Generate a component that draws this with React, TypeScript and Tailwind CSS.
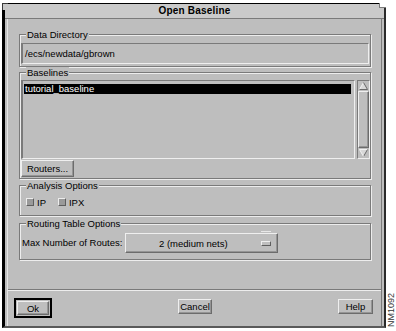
import React from "react";

const font = { fontFamily: '"Liberation Sans", Arial, Helvetica, sans-serif' };

const raised =
  "border border-t-[#efefef] border-l-[#efefef] border-b-[#6c6c6c] border-r-[#6c6c6c] shadow-[inset_-1px_-1px_0_#959595]";
const sunken =
  "border border-t-[#7a7a7a] border-l-[#7a7a7a] border-b-[#efefef] border-r-[#efefef]";

function Group({
  label,
  className = "",
  children,
}: {
  label: string;
  className?: string;
  children?: React.ReactNode;
}) {
  return (
    <div
      className={`relative border border-[#7a7a7a] shadow-[inset_1px_1px_0_#ededed,1px_1px_0_#ededed] ${className}`}
    >
      <span className="absolute left-[6px] top-[-6px] bg-[#bebebe] px-[1px] text-[9.5px] leading-[11px] text-black whitespace-nowrap">
        {label}
      </span>
      {children}
    </div>
  );
}

function Arrow({ down = false }: { down?: boolean }) {
  return (
    <div className="h-[10px] w-full flex items-center justify-center">
      <svg width="9" height="8" viewBox="0 0 9 8">
        {down ? (
          <>
            <polygon points="0.5,0.5 8.5,0.5 4.5,7.5" fill="#d8d8d8" />
            <polyline points="0.5,0.5 8.5,0.5" stroke="#f2f2f2" strokeWidth="1" fill="none" />
            <polyline points="8.5,0.5 4.5,7.5" stroke="#6a6a6a" strokeWidth="1" fill="none" />
            <polyline points="0.5,0.5 4.5,7.5" stroke="#f2f2f2" strokeWidth="1" fill="none" />
          </>
        ) : (
          <>
            <polygon points="4.5,0.5 8.5,7.5 0.5,7.5" fill="#d8d8d8" />
            <polyline points="4.5,0.5 0.5,7.5" stroke="#f2f2f2" strokeWidth="1" fill="none" />
            <polyline points="4.5,0.5 8.5,7.5 0.5,7.5" stroke="#6a6a6a" strokeWidth="1" fill="none" />
          </>
        )}
      </svg>
    </div>
  );
}

function Check({ label }: { label: string }) {
  return (
    <div className="flex items-center gap-[3px]">
      <span className="block w-[8px] h-[8px] bg-[#9a9a9a] border border-t-[#ececec] border-l-[#ececec] border-b-[#5e5e5e] border-r-[#5e5e5e]" />
      <span className="text-[9.5px] leading-[11px]">{label}</span>
    </div>
  );
}

export default function App() {
  return (
    <div
      className="w-[396px] h-[331px] bg-white flex overflow-hidden pl-[2px] pt-[3px] text-black"
      style={font}
    >
      <div className="relative w-[384px] h-[325px] flex flex-col bg-[#bebebe] border-l-[3px] border-l-black border-t border-t-black border-r-2 border-r-[#2a2a2a] border-b-2 border-b-[#5a5a5a]">
        {/* frame corner notches */}
        <span className="absolute left-[-3px] top-[-1px] block w-[6px] h-[7px] bg-[#c8c8c8] border-l border-t border-l-[#3a3a3a] border-t-[#3a3a3a]" />
        <span className="absolute right-[-2px] top-[-1px] block w-[7px] h-[5px] bg-white border-b border-l border-b-[#7a7a7a] border-l-[#7a7a7a]" />

        {/* title bar */}
        <div className="h-[15px] shrink-0 bg-[#cacaca] border-b border-b-[#7a7a7a] flex items-center justify-center">
          <span className="text-[10px] leading-[12px] font-bold tracking-[0.2px]">Open Baseline</span>
        </div>

        {/* panel */}
        <div className="flex-1 flex flex-col mx-[2px] border-l border-l-[#e6e6e6] border-r border-r-[#7a7a7a]">
          <div className="flex-1 flex flex-col pt-[15px] pl-[11px] pr-[10px]">
            <Group label="Data Directory" className="h-[33px]">
              <div className={`mt-[8px] mx-[1px] h-[21px] flex items-center pl-[2px] border-l-2 ${sunken}`}>
                <span className="text-[9.5px] leading-[11px]">/ecs/newdata/gbrown</span>
              </div>
            </Group>

            <Group label="Baselines" className="mt-[5px] h-[107px]">
              <div className="flex pt-[7px] pl-[1px]">
                <div className={`w-[334px] h-[79px] pt-[3px] px-[1px] border-l-2 ${sunken}`}>
                  <div className="h-[10px] w-[327px] bg-black text-white flex items-center pl-[1px]">
                    <span className="text-[9.5px] leading-[10px]">tutorial_baseline</span>
                  </div>
                </div>
                <div className={`ml-[2px] w-[13px] h-[79px] flex flex-col ${sunken}`}>
                  <Arrow />
                  <div className={`flex-1 ${raised}`} />
                  <Arrow down />
                </div>
              </div>
              <div className="pl-[1px] mt-[1px]">
                <div className={`w-[53px] h-[17px] flex items-center justify-center ${raised}`}>
                  <span className="text-[9.5px] leading-[11px]">Routers...</span>
                </div>
              </div>
            </Group>

            <Group label="Analysis Options" className="mt-[6px] h-[31px]">
              <div className="flex items-center pt-[3px] pl-[6px] h-full gap-[12px]">
                <Check label="IP" />
                <Check label="IPX" />
              </div>
            </Group>

            <Group label="Routing Table Options" className="mt-[7px] h-[37px]">
              <div className="flex items-center pt-[9px] pl-[2px]">
                <span className="w-[103px] text-[9.5px] leading-[20px] whitespace-nowrap">Max Number of Routes:</span>
                <div className={`relative w-[153px] h-[20px] flex items-center ${raised}`}>
                  <span className="ml-[33px] text-[9.5px] leading-[11px]">2 (medium nets)</span>
                  <span className="ml-auto mr-[6px] block w-[10px] h-[5px] bg-[#bebebe] border border-t-[#efefef] border-l-[#efefef] border-b-[#5e5e5e] border-r-[#5e5e5e]" />
                  <span className="absolute right-[6px] top-[-3px] block w-[10px] h-[1px] bg-[#e8e8e8]" />
                </div>
              </div>
            </Group>
          </div>

          {/* action area */}
          <div className="h-[37px] shrink-0 flex items-start justify-between border-t border-t-[#7a7a7a] shadow-[inset_0_1px_0_#ededed] pt-[8px] pl-[6px] pr-[8px]">
            <div className="border-2 border-black p-[1px]">
              <div className={`w-[32px] h-[14px] flex items-center justify-center ${raised}`}>
                <span className="text-[9.5px] leading-[11px]">Ok</span>
              </div>
            </div>
            <div className={`mt-[1px] w-[34px] h-[15px] flex items-center justify-center ${raised}`}>
              <span className="text-[9.5px] leading-[11px]">Cancel</span>
            </div>
            <div className={`mt-[1px] w-[35px] h-[15px] flex items-center justify-center ${raised}`}>
              <span className="text-[9.5px] leading-[11px]">Help</span>
            </div>
          </div>
        </div>
      </div>

      <div className="h-[325px] flex items-end pl-[1px] pb-[1px]">
        <span className="[writing-mode:vertical-rl] rotate-180 text-[9px] leading-[8px] text-[#333]">NM1092</span>
      </div>
    </div>
  );
}
